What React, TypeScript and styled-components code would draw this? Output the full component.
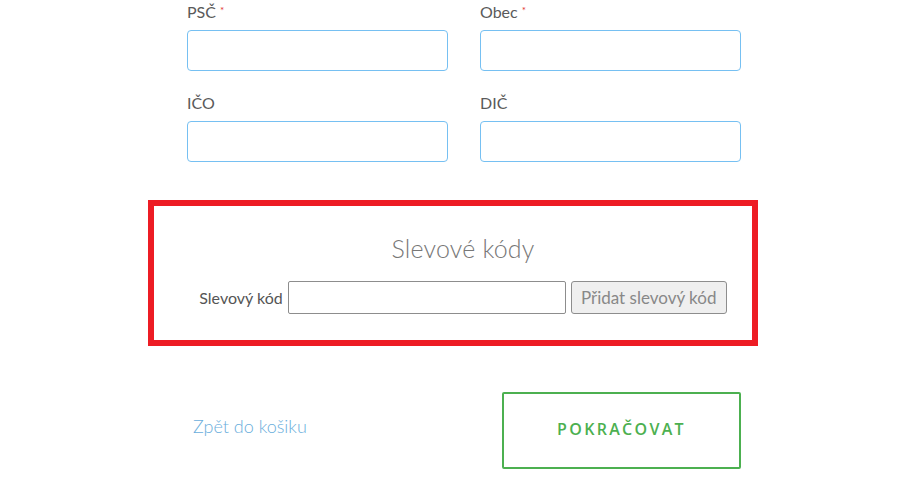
import React from "react";
import styled, { createGlobalStyle } from "styled-components";

const GlobalStyle = createGlobalStyle`
  html, body {
    margin: 0;
    padding: 0;
    background: #fff;
  }
  body {
    font-family: Lato, "Open Sans", "Liberation Sans", sans-serif;
    color: #555;
  }
`;

const Page = styled.div`
  width: 554px;
  margin-left: 187px;
  padding-top: 2px;
`;

const FieldGrid = styled.div`
  display: grid;
  grid-template-columns: 261px 261px;
  column-gap: 32px;
  row-gap: 22px;
`;

const Field = styled.div`
  display: flex;
  flex-direction: column;
`;

const Label = styled.label`
  font-size: 16px;
  line-height: 20px;
  color: #5a5a5a;
  margin-bottom: 8px;
`;

const Required = styled.span`
  color: #e3342f;
  font-size: 10px;
  vertical-align: top;
  margin-left: 4px;
  position: relative;
  top: -2px;
`;

const TextInput = styled.input`
  box-sizing: border-box;
  height: 41px;
  width: 100%;
  border: 1px solid #76c0f2;
  border-radius: 4px;
  outline: none;
  padding: 0 10px;
  font-size: 14px;
`;

const DiscountBox = styled.section`
  box-sizing: border-box;
  width: 610px;
  margin: 38px 0 0 -39px;
  border: 6px solid #ed1c24;
  padding: 25px 0 26px 20px;
  display: flex;
  flex-direction: column;
  align-items: center;
`;

const BoxTitle = styled.h2`
  margin: 0 0 16px;
  font-weight: 300;
  font-size: 25px;
  line-height: 34px;
  color: #777;
  letter-spacing: 0.2px;
`;

const CodeRow = styled.div`
  display: flex;
  align-items: center;
  gap: 5px;
`;

const CodeLabel = styled.label`
  font-size: 16px;
  color: #555;
`;

const CodeInput = styled.input`
  box-sizing: border-box;
  width: 278px;
  height: 33px;
  border: 1px solid #8d8d8d;
  border-radius: 2px;
  outline: none;
  padding: 0 6px;
  font-size: 14px;
`;

const CodeButton = styled.button`
  box-sizing: border-box;
  width: 156px;
  height: 33px;
  border: 1px solid #8d8d8d;
  border-radius: 3px;
  background: #efefef;
  color: #888;
  font-family: inherit;
  font-size: 17px;
  padding: 0;
  cursor: pointer;
`;

const Actions = styled.div`
  display: flex;
  align-items: center;
  justify-content: space-between;
  margin-top: 46px;
`;

const BackLink = styled.a`
  margin: 0 0 9px 6px;
  color: #6aaedc;
  font-size: 18px;
  font-weight: 300;
  text-decoration: none;
`;

const ContinueButton = styled.button`
  box-sizing: border-box;
  width: 239px;
  height: 77px;
  border: 2px solid #4cb050;
  border-radius: 2px;
  background: #fff;
  color: #4cb050;
  font-family: "Open Sans", sans-serif;
  font-weight: 600;
  font-size: 16px;
  letter-spacing: 2.3px;
  padding: 0 0 3px;
  cursor: pointer;
`;

const fields = [
  { label: "PSČ", required: true },
  { label: "Obec", required: true },
  { label: "IČO", required: false },
  { label: "DIČ", required: false },
];

export default function App() {
  return (
    <>
      <GlobalStyle />
      <Page>
        <FieldGrid>
          {fields.map((f) => (
            <Field key={f.label}>
              <Label>
                {f.label}
                {f.required && <Required>*</Required>}
              </Label>
              <TextInput type="text" />
            </Field>
          ))}
        </FieldGrid>

        <DiscountBox>
          <BoxTitle>Slevové kódy</BoxTitle>
          <CodeRow>
            <CodeLabel>Slevový kód</CodeLabel>
            <CodeInput type="text" />
            <CodeButton type="button">Přidat slevový kód</CodeButton>
          </CodeRow>
        </DiscountBox>

        <Actions>
          <BackLink href="#">Zpět do košiku</BackLink>
          <ContinueButton type="button">POKRAČOVAT</ContinueButton>
        </Actions>
      </Page>
    </>
  );
}
